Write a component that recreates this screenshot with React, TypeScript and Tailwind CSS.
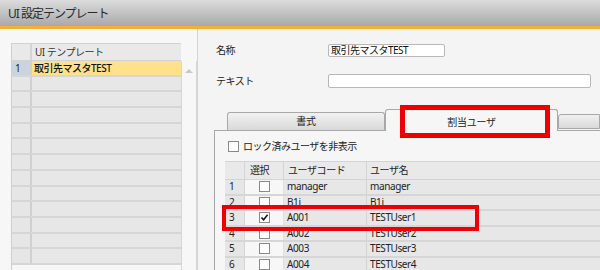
import React from "react";

const font = { fontFamily: '"Noto Sans", "Noto Sans CJK JP", sans-serif' };

function LeftTable() {
  const rows = Array.from({ length: 13 });
  return (
    <div className="flex">
      <div className="w-[170px] border-l border-[#cfcfcf]">
        <div className="flex h-[18px] bg-[#e9e9e9] border-y border-[#d2d2d2]">
          <div className="w-[20px] border-r-2 border-[#d4d4d4]" />
          <div className="flex-1 pl-[3px] text-[10px] tracking-[-0.5px] leading-[16px] text-[#333]">UI テンプレート</div>
        </div>
        {rows.map((_, i) => (
          <div key={i} className="flex h-[15.7px] border-b-2 border-[#d6d6d6]">
            <div
              className={`w-[20px] border-r-2 border-[#d0d0d0] pl-[3px] text-[10px] leading-[14px] text-[#222] ${
                i === 0 ? "bg-[#cbd4dc]" : "bg-[#e6e6e6]"
              }`}
            >
              {i === 0 ? "1" : ""}
            </div>
            <div
              className={`flex-1 pl-[2px] text-[10px] tracking-[-0.5px] leading-[14px] text-[#111] font-medium ${
                i === 0 ? "bg-[#fde18c]" : "bg-[#e7e7e7]"
              }`}
            >
              {i === 0 ? "取引先マスタTEST" : ""}
            </div>
          </div>
        ))}
      </div>
      <div className="w-[16px] h-[240px] mt-[18px] border-x border-[#d6d6d6] bg-[#f7f7f7] flex justify-center">
        <svg width="10" height="12" viewBox="0 0 10 12" className="mt-[5px]">
          <path d="M1 7 L5 3 L9 7 Z" fill="#c8c8c8" />
        </svg>
      </div>
    </div>
  );
}

function Checkbox({ checked }: { checked?: boolean }) {
  return (
    <div className="w-[11px] h-[11px] border border-[#8a8a8a] bg-white flex items-center justify-center">
      {checked && (
        <svg width="9" height="9" viewBox="0 0 9 9">
          <path d="M1.5 4.5 L3.6 6.8 L7.6 1.8" stroke="#111" strokeWidth="1.5" fill="none" />
        </svg>
      )}
    </div>
  );
}

function UserGrid() {
  const data = [
    ["1", "manager", "manager", false],
    ["2", "B1i", "B1i", false],
    ["3", "A001", "TESTUser1", true],
    ["4", "A002", "TESTUser2", false],
    ["5", "A003", "TESTUser3", false],
    ["6", "A004", "TESTUser4", false],
  ] as const;
  return (
    <div className="text-[10px] tracking-[-0.4px] text-[#222]">
      <div className="flex h-[19px] bg-[#e9e9e9] border-y border-[#d4d4d4] leading-[17px]">
        <div className="w-[20px] border-r border-[#d4d4d4]" />
        <div className="w-[39px] border-r border-[#d4d4d4] pl-[5px]">選択</div>
        <div className="w-[83px] border-r border-[#d4d4d4] pl-[4px]">ユーザコード</div>
        <div className="flex-1 pl-[3px]">ユーザ名</div>
      </div>
      {data.map(([n, code, name, checked]) => (
        <div key={n} className="flex h-[15.6px] border-b-2 border-[#d6d6d6] leading-[13px]">
          <div className="w-[20px] bg-[#e6e6e6] border-r border-[#d4d4d4] pl-[4px]">{n}</div>
          <div className="w-[39px] bg-[#f7f7f7] border-r border-[#e0e0e0] flex justify-center items-start pt-[1px]">
            <Checkbox checked={checked} />
          </div>
          <div className="w-[83px] bg-[#e7e7e7] border-r border-[#d4d4d4] pl-[3px]">{code}</div>
          <div className="flex-1 bg-[#e7e7e7] pl-[3px]">{name}</div>
        </div>
      ))}
    </div>
  );
}

export default function App() {
  return (
    <div className="relative w-[600px] h-[270px] overflow-hidden bg-[#f4f4f4]" style={font}>
      <div className="h-[26px] bg-gradient-to-b from-[#dcdcdc] to-[#a9a9a9] pl-[8px] text-[12px] tracking-[-1px] leading-[28px] text-[#2a2a2a]">
        UI 設定テンプレート
      </div>
      <div className="h-[3px] bg-[#f2b133]" />
      <div className="flex">
        <div className="w-[197px] pl-[11px] pt-[14px] h-[241px] bg-[#f7f7f7]">
          <LeftTable />
        </div>
        <div className="flex-1 pt-[14px] border-l border-[#d4d4d4]">
          <div className="flex items-center h-[14px] pl-[18px]">
            <div className="w-[112px] text-[10px] tracking-[-0.5px] text-[#222]">名称</div>
            <div className="w-[117px] h-[13px] border border-[#b8b8b8] rounded-[2px] bg-white text-[10px] tracking-[-0.5px] leading-[11px] pl-[2px] text-[#111]">
              取引先マスタTEST
            </div>
          </div>
          <div className="flex items-center h-[14px] mt-[17px] pl-[18px]">
            <div className="w-[112px] text-[10px] tracking-[-0.5px] text-[#222]">テキスト</div>
            <div className="w-[263px] h-[14px] border border-[#b8b8b8] rounded-[2px] bg-white" />
          </div>
          <div className="ml-[16px] mt-[20px]">
            <div className="flex items-end h-[22px] pl-[13px]">
              <div className="w-[158px] h-[18px] border border-[#a8a8a8] border-b-0 rounded-t-[3px] bg-gradient-to-b from-[#f2f2f2] to-[#d9d9d9] text-center text-[10px] tracking-[-0.3px] leading-[17px] text-[#222]">
                書式
              </div>
              <div className="w-[173px] h-[22px] -mb-px relative z-10 border border-[#a8a8a8] border-b-0 rounded-t-[3px] bg-[#f6f6f6] text-center text-[10px] tracking-[-0.3px] leading-[24px] text-[#222]">
                割当ユーザ
              </div>
              <div className="flex-1 h-[15px] mb-[1px] border border-[#a8a8a8] rounded-tl-[3px] bg-gradient-to-b from-[#f0f0f0] to-[#d9d9d9]" />
            </div>
            <div className="border-l border-t border-[#a8a8a8] bg-[#f6f6f6] h-[140px] pl-[13px] pt-[10px]">
              <div className="flex items-center gap-[4px] h-[11px]">
                <Checkbox />
                <span className="text-[10px] tracking-[-0.5px] text-[#222] leading-[11px]">ロック済みユーザを非表示</span>
              </div>
              <div className="mt-[9px] -ml-[3px]">
                <UserGrid />
              </div>
            </div>
          </div>
        </div>
      </div>
      <div className="absolute z-20 left-[400px] top-[105px] w-[150px] h-[33px] border-[5px] border-[#ee0000]" />
      <div className="absolute z-20 left-[222px] top-[205px] w-[257px] h-[26px] border-[4px] border-[#ee0000]" />
    </div>
  );
}
